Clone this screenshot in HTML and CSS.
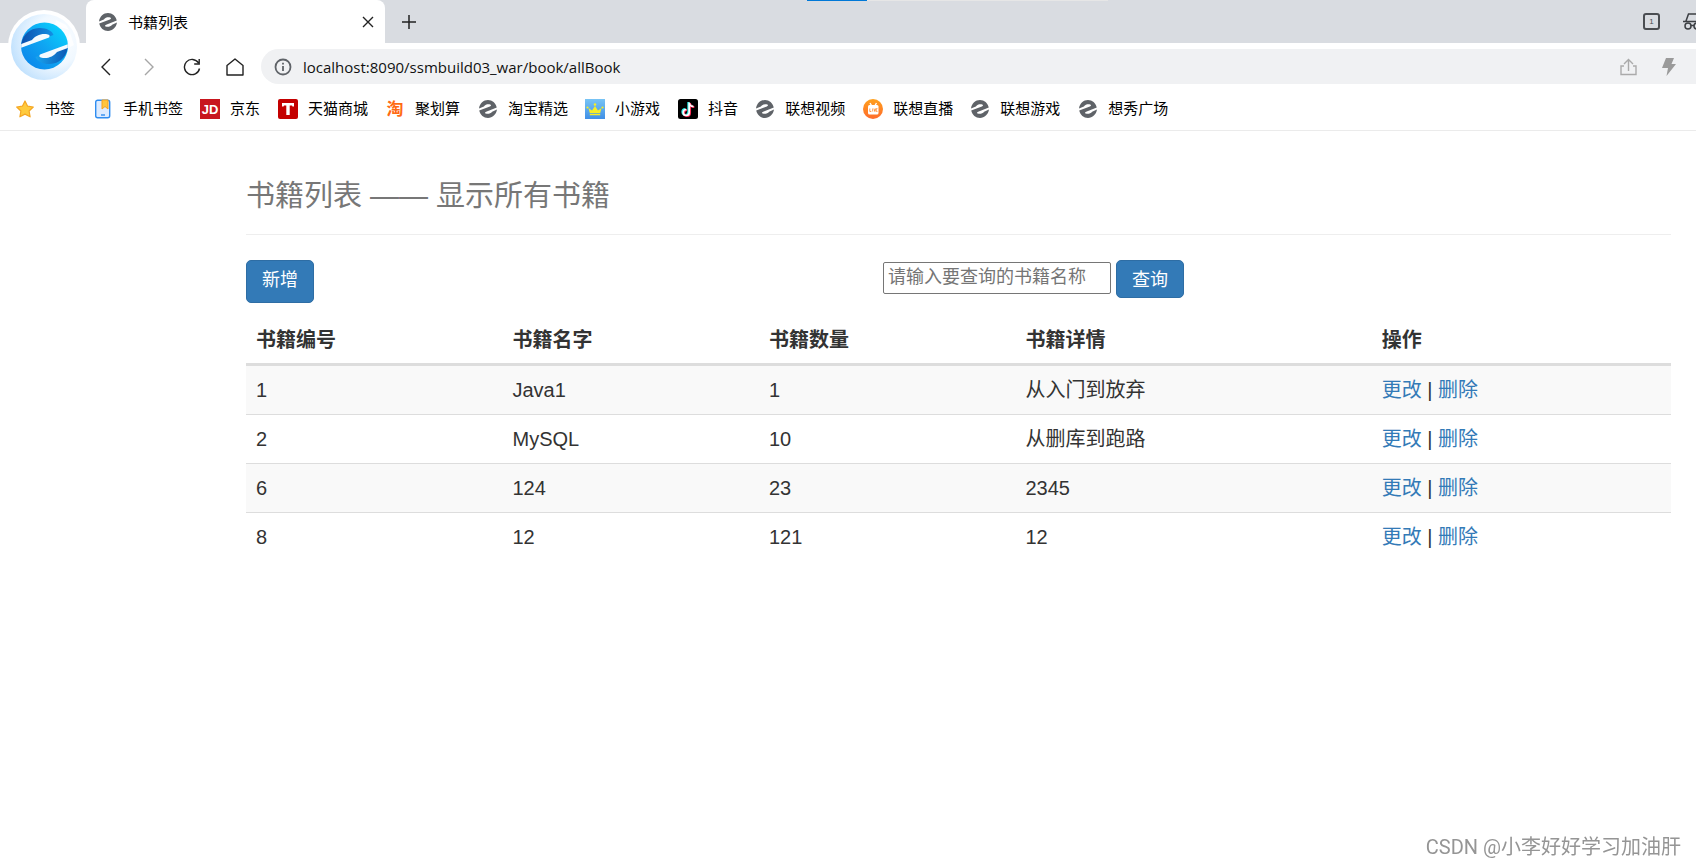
FILE: index.html
```html
<!DOCTYPE html>
<html lang="zh-CN">
<head>
<meta charset="utf-8">
<title>书籍列表</title>
<link rel="stylesheet" href="styles.css">
</head>
<body>
<svg class="defs" aria-hidden="true">
  <defs>
    <linearGradient id="ball" x1="0" y1="1" x2="1" y2="0"><stop offset="0" stop-color="#0a7fe8"/><stop offset=".5" stop-color="#0fa5f2"/><stop offset="1" stop-color="#06dcff"/></linearGradient>
    <linearGradient id="shade" x1="0" y1="0" x2="1" y2="0"><stop offset="0" stop-color="#0b4fae"/><stop offset="1" stop-color="#1390e4"/></linearGradient>
    <linearGradient id="shade2" x1="0" y1="0" x2="1" y2="0"><stop offset="0" stop-color="#18a4ee"/><stop offset="1" stop-color="#0d58b4"/></linearGradient>
    <radialGradient id="glass" cx=".68" cy=".4" r=".75"><stop offset="0" stop-color="#fff"/><stop offset=".5" stop-color="#f0f8ff"/><stop offset="1" stop-color="#badefd"/></radialGradient>
    <linearGradient id="orange" x1="0" y1="0" x2="0" y2="1"><stop offset="0" stop-color="#ffa01c"/><stop offset="1" stop-color="#ff6b2c"/></linearGradient>
    <linearGradient id="sky" x1="0" y1="0" x2="0" y2="1"><stop offset="0" stop-color="#78c4f5"/><stop offset="1" stop-color="#3f8fe6"/></linearGradient>
    <symbol id="e" viewBox="0 0 24 24">
      <path fill="#5f6368" d="M12 0C6 0 1 4.500 0 11.200L6.500 8.500C8.500 5.800 12 5.200 15 6c1.600.6 1.200 1.900-.5 2.500L.3 14C1.500 19.800 6.400 24 12 24c6 0 11-4.500 12-11.200L17.500 15.500C15.500 18.200 12 18.800 9 18c-1.600-.6-1.200-1.900.5-2.500L23.700 10C22.500 4.200 17.600 0 12 0z"/>
    </symbol>
  </defs>
</svg>

<header class="browser">
  <svg class="logo" viewBox="0 0 72 72" role="img" aria-label="浏览器">
    <circle cx="36" cy="36" r="36" fill="#fff"/>
    <circle cx="36" cy="37" r="33" fill="url(#glass)"/>
    <path d="M48 10l10 5 3 5-14-5zM62 23l4 12-4 2-2-10z" fill="#fff" opacity=".8"/>
    <g transform="translate(13 12.500)">
      <circle cx="23.500" cy="23.500" r="23.500" fill="url(#ball)"/>
      <path d="M.4 21C2 12 9 6 18 5.500c7-.3 13 2.500 14.500 7L12 20 .4 23z" fill="url(#shade)"/>
      <path d="M46.600 26C45 35 38 41 29 41.500c-7 .3-13-2.500-14.500-7L35 27l11.600-3z" fill="url(#shade2)"/>
      <path d="M.2 21.500L11 17.500c3-4 8-6.500 14-6 3 .3 4.500 1.500 3 3.500L.2 25.300zM46.800 25.500L36 29.500c-3 4-8 6.500-14 6-3-.3-4.500-1.500-3-3.500l27.800-10.300z" fill="#f4faff"/>
    </g>
  </svg>
  <div class="progress"><span class="progress-done"></span></div>
  <div class="tabs">
    <div class="tab">
      <svg class="e-icon" viewBox="0 0 24 24"><use href="#e"/></svg>
      <span class="tab-title">书籍列表</span>
      <button class="icon-btn tab-close" aria-label="关闭"><svg width="12" height="12" viewBox="0 0 12 12"><path d="M1 1l10 10M11 1L1 11" stroke="#222" stroke-width="1.400"/></svg></button>
    </div>
    <button class="icon-btn new-tab" aria-label="新标签"><svg width="16" height="16" viewBox="0 0 16 16"><path d="M8 1v14M1 8h14" stroke="#222" stroke-width="1.500"/></svg></button>
    <div class="window-tools">
      <button class="icon-btn count" aria-label="标签数"><span>1</span></button>
      <svg width="24" height="18" viewBox="0 0 24 18" fill="none" stroke="#3c3f43" stroke-width="1.500"><path d="M0 8.500h24M3 8L5.500 1h13L21 8"/><circle cx="5" cy="13" r="3"/><circle cx="14" cy="13" r="3"/><path d="M8 12.500h3"/></svg>
    </div>
  </div>
  <nav class="address-row">
    <button class="icon-btn" aria-label="后退"><svg width="18" height="18" viewBox="0 0 18 18" fill="none" stroke="#222" stroke-width="1.400"><path d="M13 1L5 9l8 8"/></svg></button>
    <button class="icon-btn" aria-label="前进"><svg width="18" height="18" viewBox="0 0 18 18" fill="none" stroke="#a6a6a6" stroke-width="1.400"><path d="M5 1l8 8-8 8"/></svg></button>
    <button class="icon-btn" aria-label="刷新"><svg width="18" height="18" viewBox="0 0 18 18" fill="none" stroke="#222" stroke-width="1.400"><path d="M16.500 10.500a7.600 7.600 0 1 1-1-5.500M16.200 1v5h-5"/></svg></button>
    <button class="icon-btn" aria-label="主页"><svg width="18" height="18" viewBox="0 0 18 18" fill="none" stroke="#222" stroke-width="1.400"><path d="M1 7.500L9 1l8 6.500V17H1z" stroke-linejoin="round"/></svg></button>
    <div class="address">
      <svg width="18" height="18" viewBox="0 0 18 18" fill="none" stroke="#5f6368" stroke-width="1.800"><circle cx="9" cy="9" r="7.500"/><path d="M9 8v5M9 4.700v1.800"/></svg>
      <input class="url" type="text" aria-label="地址" value="localhost:8090/ssmbuild03_war/book/allBook">
      <button class="icon-btn" aria-label="分享"><svg width="17" height="18" viewBox="0 0 17 18" fill="none" stroke="#aaa" stroke-width="1.400"><path d="M4 8H1v8.500h15V8h-3M8.500 13V2M4 6l4.500-4.500L13 6"/></svg></button>
      <button class="icon-btn" aria-label="极速模式"><svg width="14" height="18" viewBox="0 0 14 18"><path d="M4 0h8L9.500 6H14L4.500 18 6 10H0z" fill="#9a9a9a"/></svg></button>
    </div>
  </nav>
  <nav class="bookmarks">
    <a href="#"><svg class="bm" viewBox="0 0 20 20"><path d="M10 2l2.600 5.200 5.700.8-4.200 4 1 5.800L10 15.100l-5.100 2.700 1-5.800-4.200-4 5.700-.8z" fill="#ffcb3d" stroke="#f5a623" stroke-width="1.200" stroke-linejoin="round"/></svg>书签</a>
    <a href="#"><svg class="bm" viewBox="0 0 20 20"><rect x="2.700" y="1.200" width="14" height="17.500" rx="2" fill="#dcebff" stroke="#2f8df0" stroke-width="1.400"/><path d="M9 1h6v9l-3-2.500L9 10z" fill="#ffc53d" stroke="#f5a11f"/><path d="M8 16h4" stroke="#2f8df0" stroke-width="1.400"/></svg>手机书签</a>
    <a href="#"><svg class="bm" viewBox="0 0 20 20"><path fill="#c8161e" d="M0 0h20v20H0z"/><text x="10" y="15" class="jd">JD</text></svg>京东</a>
    <a href="#"><svg class="bm" viewBox="0 0 20 20"><rect width="20" height="20" rx="2" fill="#c40000"/><path d="M4 4h12v3.500h-1.500L14 6.500h-2.300V16H8.300V6.500H6l-.5 1H4z" fill="#fff"/></svg>天猫商城</a>
    <a href="#"><svg class="bm" viewBox="0 0 20 20"><text x="10" y="16" class="tao">淘</text></svg>聚划算</a>
    <a href="#"><svg class="bm e-pad" viewBox="0 0 24 24"><use href="#e"/></svg>淘宝精选</a>
    <a href="#"><svg class="bm" viewBox="0 0 20 20"><path fill="url(#sky)" d="M0 0h20v20H0z"/><path d="M3.500 9L7 11.500 10 7l3 4.500L16.500 9l-1.300 5H4.800zM4.800 14.800h10.400v1.500H4.800z" fill="#f8ee24"/><g fill="#f8ee24"><circle cx="10" cy="5.500" r="1.300"/><circle cx="2.500" cy="8.500" r="1.100"/><circle cx="17.500" cy="8.500" r="1.100"/></g></svg>小游戏</a>
    <a href="#"><svg class="bm" viewBox="0 0 20 20"><rect width="20" height="20" rx="2.500"/><g fill="none" stroke-width="2.100"><path d="M10.400 3v10a3 3 0 1 1-3-3M10.400 3c.2 2.500 2 4 4.300 4" stroke="#25f4ee"/><path d="M12 4v10a3 3 0 1 1-3-3M12 4c.2 2.500 2 4 4.300 4" stroke="#fe2c55"/><path d="M11.200 3.500v10a3 3 0 1 1-3-3M11.200 3.500c.2 2.500 2 4 4.300 4" stroke="#fff" stroke-width="1.700"/></g></svg>抖音</a>
    <a href="#"><svg class="bm e-pad" viewBox="0 0 24 24"><use href="#e"/></svg>联想视频</a>
    <a href="#"><svg class="bm" viewBox="0 0 20 20"><circle cx="10" cy="10" r="10" fill="url(#orange)"/><rect x="5" y="6" width="10.500" height="9.500" rx="1.500" fill="#fff"/><path d="M7 4l1.500 2.500M13.500 4L12 6.500" stroke="#fff" stroke-width="1.400"/><path d="M6.800 9.500v3h1.500M9.700 9.500v3M11 9.500l.8 3 .8-3M14.500 9.700h-1.300v2.700h1.300" fill="none" stroke="#ff8423" stroke-width=".8"/></svg>联想直播</a>
    <a href="#"><svg class="bm e-pad" viewBox="0 0 24 24"><use href="#e"/></svg>联想游戏</a>
    <a href="#"><svg class="bm e-pad" viewBox="0 0 24 24"><use href="#e"/></svg>想秀广场</a>
  </nav>
</header>

<main class="page">
  <h1 class="page-header">书籍列表 —— 显示所有书籍</h1>
  <div class="toolbar">
    <a class="btn btn-add" href="#">新增</a>
    <form class="search">
      <input class="search-input" type="text" aria-label="书籍名称" placeholder="请输入要查询的书籍名称">
      <button class="btn" type="button">查询</button>
    </form>
  </div>
  <table class="books">
    <colgroup><col class="c1"><col class="c1"><col class="c1"><col class="c2"><col></colgroup>
    <thead><tr><th>书籍编号</th><th>书籍名字</th><th>书籍数量</th><th>书籍详情</th><th>操作</th></tr></thead>
    <tbody>
      <tr><td>1</td><td>Java1</td><td>1</td><td>从入门到放弃</td><td><a href="#">更改</a> | <a href="#">删除</a></td></tr>
      <tr><td>2</td><td>MySQL</td><td>10</td><td>从删库到跑路</td><td><a href="#">更改</a> | <a href="#">删除</a></td></tr>
      <tr><td>6</td><td>124</td><td>23</td><td>2345</td><td><a href="#">更改</a> | <a href="#">删除</a></td></tr>
      <tr><td>8</td><td>12</td><td>121</td><td>12</td><td><a href="#">更改</a> | <a href="#">删除</a></td></tr>
    </tbody>
  </table>
</main>
<div class="watermark">CSDN @小李好好学习加油肝</div>
</body>
</html>
```
FILE: styles.css
```css
* {
  box-sizing: border-box;
}

body {
  margin: 0;
  background: #fff;
  color: #333;
  font-family: "Liberation Sans", "Noto Sans CJK SC", sans-serif;
  font-size: 20px;
  overflow-x: hidden;
}

a {
  color: #337ab7;
  text-decoration: none;
}

button,
input {
  font-family: inherit;
}

.defs {
  position: absolute;
  width: 0;
  height: 0;
}

/* Browser chrome */
.browser {
  position: relative;
  border-bottom: 1px solid #ebebeb;
  color: #000;
  font-size: 15px;
}

.logo {
  position: absolute;
  top: 10px;
  left: 8px;
  width: 72px;
  height: 72px;
}

.progress {
  position: absolute;
  top: 0;
  left: 807px;
  width: 301px;
  height: 1px;
  background: #e6e6e6;
}

.progress-done {
  display: block;
  width: 20%;
  height: 1px;
  background: #0078d7;
}

.tabs {
  display: flex;
  align-items: center;
  height: 43px;
  padding-left: 86px;
  background: #d9dce1;
}

.tab {
  display: flex;
  align-items: center;
  align-self: stretch;
  width: 299px;
  padding: 0 11px 0 13px;
  border-radius: 8px 8px 0 0;
  background: #fff;
}

.e-icon {
  width: 18px;
  height: 18px;
}

.tab-title {
  flex: 1;
  padding-left: 11px;
}

.icon-btn {
  display: flex;
  align-items: center;
  justify-content: center;
  padding: 0;
  border: 0;
  background: none;
}

.new-tab {
  margin-left: 16px;
}

.window-tools {
  display: flex;
  align-items: center;
  gap: 23px;
  margin: 0 -11px 0 auto;
}

.count {
  width: 17px;
  height: 17px;
  border: 2px solid #4a4d51;
  border-radius: 3px;
  font-size: 8px;
  color: #4a4d51;
}

.address-row {
  display: flex;
  align-items: center;
  gap: 24px;
  height: 47px;
  padding-left: 96px;
}

.address-row > .icon-btn {
  width: 19px;
}

.address {
  display: flex;
  align-items: center;
  flex: 1;
  height: 35px;
  margin-left: -7px;
  padding: 0 20px 0 13px;
  border-radius: 18px 0 0 18px;
  background: #f0f1f3;
}

.address .icon-btn {
  margin-left: 25px;
}

.url {
  flex: 1;
  padding: 0 0 0 11px;
  border: 0;
  background: none;
  color: #111;
  font-family: "Open Sans", sans-serif;
  font-size: 15px;
}

.bookmarks {
  display: flex;
  align-items: center;
  gap: 17px;
  height: 40px;
  padding: 0 0 5px 15px;
}

.bookmarks a {
  display: flex;
  align-items: center;
  gap: 10px;
  color: #000;
  white-space: nowrap;
}

.bookmarks a:nth-child(odd) {
  padding-right: 1px;
}

.bm {
  width: 20px;
  height: 20px;
  margin-top: 2px;
  overflow: visible;
}

.e-pad {
  padding: 1px;
}

.jd {
  fill: #fff;
  font: bold 13px "Liberation Sans", sans-serif;
  text-anchor: middle;
}

.tao {
  fill: #ff6a13;
  font: bold 17px "Noto Sans CJK SC", sans-serif;
  text-anchor: middle;
}

/* Page content */
.page {
  padding: 40px 25px 0 246px;
}

.page-header {
  margin: 0 0 25px;
  padding-bottom: 13px;
  border-bottom: 1px solid #eee;
  color: #777;
  font-size: 29px;
  font-weight: 400;
  line-height: 50px;
}

.toolbar {
  display: flex;
  align-items: flex-start;
  justify-content: space-between;
  width: 66.67%;
  padding-right: 12px;
}

.btn {
  height: 38px;
  padding: 1px 15px 0;
  border: 1px solid #2e6da4;
  border-radius: 5px;
  background: #337ab7;
  color: #fff;
  font-size: 18px;
  line-height: 37px;
}

.btn-add {
  height: 43px;
}

.search {
  display: flex;
  align-items: flex-start;
  gap: 5px;
}

.search-input {
  width: 228px;
  height: 32px;
  margin-top: 2px;
  padding: 0 4px 2px;
  border: 1px solid #767676;
  border-radius: 2px;
  background: #fff;
  font-size: 18px;
}

.search-input::placeholder {
  color: #757575;
}

.books {
  width: 100%;
  margin-top: 9px;
  border-collapse: collapse;
  table-layout: fixed;
  line-height: 28px;
}

.c1 {
  width: 18%;
}

.c2 {
  width: 25%;
}

.books th,
.books td {
  padding: 10px;
  text-align: left;
}

.books th {
  padding-top: 14px;
  padding-bottom: 9px;
  border-bottom: 3px solid #ddd;
}

.books td {
  border-top: 1px solid #ddd;
}

.books tbody tr:nth-child(odd) {
  background: #f9f9f9;
}

.watermark {
  position: fixed;
  right: 15px;
  bottom: 4px;
  color: #959595;
  font-family: Roboto, "Noto Sans CJK SC", sans-serif;
  line-height: 30px;
}
```
